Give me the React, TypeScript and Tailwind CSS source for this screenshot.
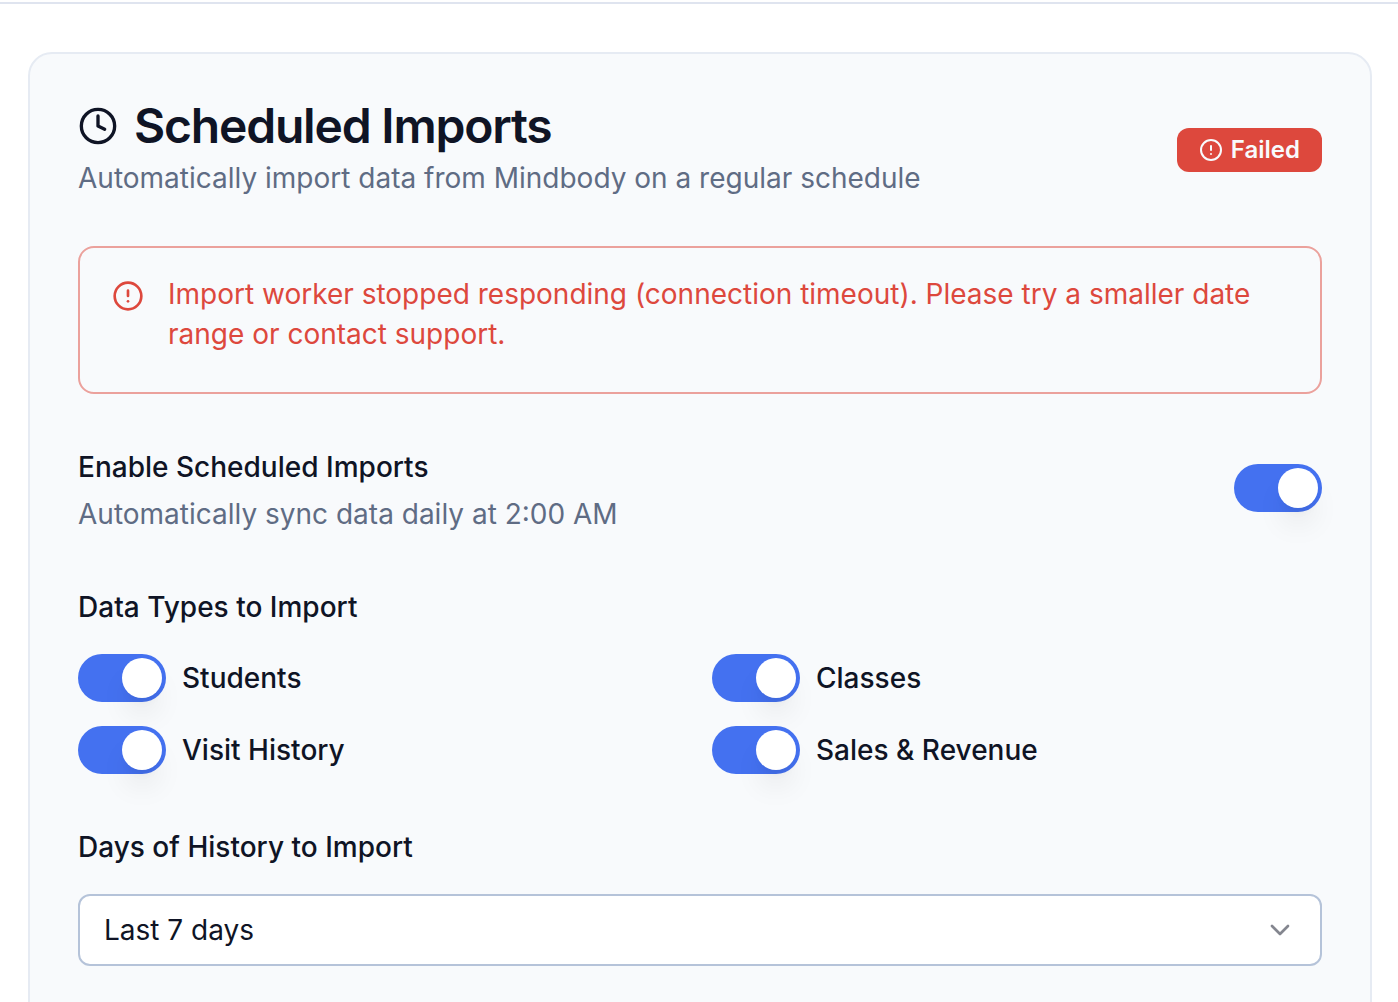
import type { ReactNode } from "react";
import { Clock, CircleAlert, ChevronDown } from "lucide-react";

function Toggle() {
  return (
    <span className="flex h-12 w-[88px] shrink-0 items-center justify-end rounded-full bg-[#4471f0] p-1">
      <span className="size-10 rounded-full bg-white shadow-[0_20px_30px_-6px_rgba(0,0,0,0.1),0_8px_12px_-8px_rgba(0,0,0,0.1)]" />
    </span>
  );
}

function Label({ children }: { children: ReactNode }) {
  return <div className="text-[28px] leading-7 font-medium tracking-[0.01px]">{children}</div>;
}

export default function App() {
  return (
    <div className="h-[1002px] overflow-hidden bg-white pt-0.5 font-['Inter',sans-serif] text-[#0f1425]">
      <div className="h-0.5 bg-[#dfe4ef]" />
      <section className="mt-12 mr-[26px] ml-7 h-[1100px] rounded-3xl border-2 border-[#e6ebf3] bg-[#f8fafc] px-12 pt-12">
        <header className="flex h-24 items-center justify-between">
          <div>
            <h1 className="flex h-12 items-center gap-4 text-[48px] leading-[48px] font-semibold tracking-[-1.2px]">
              <Clock className="size-10" strokeWidth={2} />
              Scheduled Imports
            </h1>
            <p className="mt-2 text-[28px] leading-10 text-[#5f6c84]">
              Automatically import data from Mindbody on a regular schedule
            </p>
          </div>
          <div className="flex h-11 items-center gap-2 rounded-xl bg-[#dd483d] px-[22px] text-2xl font-semibold text-[#f8fafc]">
            <CircleAlert className="size-6" />
            Failed
          </div>
        </header>
        <div className="mt-12 flex h-[148px] gap-6 rounded-2xl border-2 border-[#eba19c] px-8 pt-[26px] text-[#dd483d]">
          <CircleAlert className="mt-1.5 size-8 shrink-0" />
          <p className="text-[28px] leading-10">
            Import worker stopped responding (connection timeout). Please try a smaller date
            range or contact support.
          </p>
        </div>
        <div className="mt-12 flex items-center justify-between">
          <div className="pt-[11px]">
            <Label>Enable Scheduled Imports</Label>
            <p className="mt-[13px] text-[28px] leading-10 text-[#5f6c84]">Automatically sync data daily at 2:00 AM</p>
          </div>
          <Toggle />
        </div>
        <div className="mt-[59px]">
          <Label>Data Types to Import</Label>
          <div className="mt-[33px] grid grid-cols-2 gap-6">
            {["Students", "Classes", "Visit History", "Sales & Revenue"].map((name) => (
              <div key={name} className="flex items-center gap-4">
                <Toggle />
                <Label>{name}</Label>
              </div>
            ))}
          </div>
        </div>
        <div className="mt-[59px]">
          <Label>Days of History to Import</Label>
          <div className="mt-[33px] flex h-[72px] items-center justify-between rounded-xl border-2 border-[#b5c3d9] bg-white px-6 text-[28px]">
            Last 7 days
            <ChevronDown className="size-8 text-[#84868f]" />
          </div>
        </div>
      </section>
    </div>
  );
}
